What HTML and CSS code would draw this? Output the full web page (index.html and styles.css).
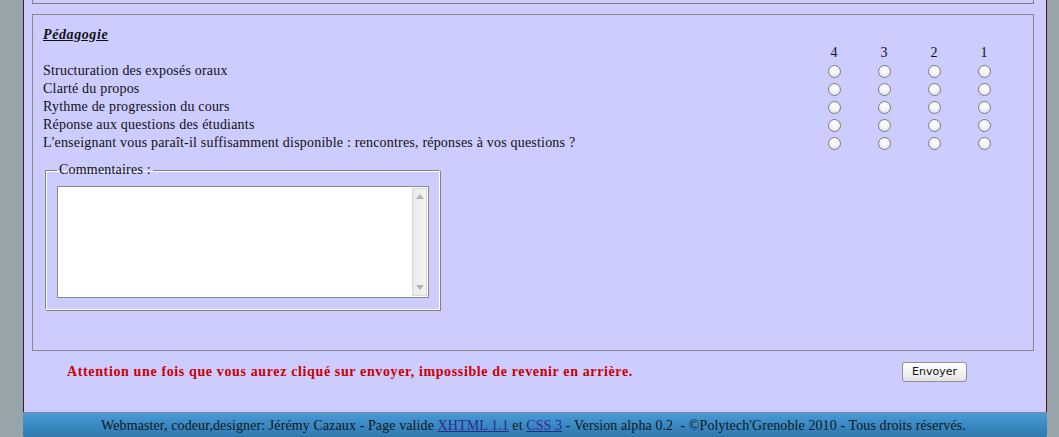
FILE: index.html
```html
<!DOCTYPE html>
<html lang="fr">
<head>
<meta charset="utf-8">
<title>Évaluation</title>
<link rel="stylesheet" href="styles.css">
</head>
<body>
<div class="page">
  <div class="main">
    <div class="prev-block"></div>
    <fieldset class="section">
      <h2 class="section-title">Pédagogie</h2>
      <div class="grid">
        <div class="head-label"></div>
        <div class="num">4</div><div class="num">3</div><div class="num">2</div><div class="num">1</div>

        <div class="label">Structuration des exposés oraux</div>
        <div class="cell"><input type="radio" name="q1"></div><div class="cell"><input type="radio" name="q1"></div><div class="cell"><input type="radio" name="q1"></div><div class="cell"><input type="radio" name="q1"></div>

        <div class="label">Clarté du propos</div>
        <div class="cell"><input type="radio" name="q2"></div><div class="cell"><input type="radio" name="q2"></div><div class="cell"><input type="radio" name="q2"></div><div class="cell"><input type="radio" name="q2"></div>

        <div class="label">Rythme de progression du cours</div>
        <div class="cell"><input type="radio" name="q3"></div><div class="cell"><input type="radio" name="q3"></div><div class="cell"><input type="radio" name="q3"></div><div class="cell"><input type="radio" name="q3"></div>

        <div class="label">Réponse aux questions des étudiants</div>
        <div class="cell"><input type="radio" name="q4"></div><div class="cell"><input type="radio" name="q4"></div><div class="cell"><input type="radio" name="q4"></div><div class="cell"><input type="radio" name="q4"></div>

        <div class="label">L'enseignant vous paraît-il suffisamment disponible : rencontres, réponses à vos questions ?</div>
        <div class="cell"><input type="radio" name="q5"></div><div class="cell"><input type="radio" name="q5"></div><div class="cell"><input type="radio" name="q5"></div><div class="cell"><input type="radio" name="q5"></div>
      </div>
      <fieldset class="comments">
        <legend>Commentaires :</legend>
        <div class="comment-box">
          <textarea class="comment-input"></textarea>
          <div class="scrollbar">
            <span class="arrow arrow-up"></span>
            <span class="arrow arrow-down"></span>
          </div>
        </div>
      </fieldset>
    </fieldset>
    <div class="submit-row">
      <p class="warning">Attention une fois que vous aurez cliqué sur envoyer, impossible de revenir en arrière.</p>
      <button class="send" type="submit">Envoyer</button>
    </div>
  </div>
  <div class="footer">
    Webmaster, codeur,designer: Jérémy Cazaux - Page valide <a href="#">XHTML 1.1</a> et <a href="#">CSS 3</a> - Version alpha 0.2 &nbsp;- ©Polytech'Grenoble 2010 - Tous droits réservés.
  </div>
</div>
</body>
</html>
```

FILE: styles.css
```css
html, body {
  margin: 0;
  padding: 0;
  background: #97a4a9;
  height: 437px;
  overflow: hidden;
}

body {
  font-family: "Liberation Serif", "Times New Roman", serif;
  font-size: 14px;
  color: #111;
}

.page {
  margin-left: 23px;
  width: 1024px;
}

.main {
  background: #ccccff;
  border-left: 1px solid #4a1428;
  border-right: 1px solid #5c0a0a;
  padding: 0 12px 0 8px;
}

.prev-block {
  height: 3px;
  border: 1px solid #808080;
  border-top: none;
  margin-bottom: 10px;
}

.section {
  margin: 0;
  border: 1px solid #888;
  padding: 11px 10px 0 10px;
  box-sizing: border-box;
  height: 337px;
}

.section-title {
  margin: 0;
  font-size: 14px;
  font-weight: bold;
  font-style: italic;
  text-decoration: underline;
  line-height: 18px;
  letter-spacing: 0.6px;
}

.grid {
  display: grid;
  grid-template-columns: 1fr 50px 50px 50px 50px;
  grid-auto-rows: 18px;
  margin-right: 14px;
  line-height: 18px;
}

.num {
  text-align: center;
  font-size: 14px;
}

.label {
  white-space: nowrap;
  letter-spacing: 0.2px;
}

.cell {
  display: flex;
  align-items: center;
  justify-content: center;
}

.cell input[type="radio"] {
  -webkit-appearance: none;
  appearance: none;
  margin: 0;
  width: 13px;
  height: 13px;
  border-radius: 50%;
  border: 1px solid #7d7d7d;
  background: radial-gradient(circle at 50% 35%, #ffffff 0%, #f4f4f6 45%, #d4d6dc 100%);
  box-sizing: border-box;
}

.comments {
  margin: 11px 0 0 2px;
  width: 395px;
  height: 147px;
  box-sizing: border-box;
  border-style: solid;
  border-width: 1px;
  border-color: #808080 #ffffff #ffffff #808080;
  box-shadow: inset 1px 1px 0 #fff, 1px 1px 0 #808080;
  padding: 9px 10px 0 11px;
}

.comments legend {
  padding: 0 2px;
  font-size: 14px;
  line-height: 14px;
  letter-spacing: 0.2px;
}

.comment-box {
  display: flex;
  width: 372px;
  height: 112px;
  box-sizing: border-box;
  border: 1px solid #8a8a8a;
  background: #fff;
}

.comment-input {
  flex: 1;
  margin: 0;
  border: none;
  outline: none;
  resize: none;
  background: #fff;
  font-family: "Liberation Mono", monospace;
}

.scrollbar {
  width: 15px;
  margin: 1px 1px 1px 0;
  box-sizing: border-box;
  border: 1px solid #d8d8d8;
  background: linear-gradient(90deg, #eaeaea, #f4f4f4);
  display: flex;
  flex-direction: column;
  justify-content: space-between;
  align-items: center;
  padding: 5px 0 5px;
}

.arrow {
  width: 0;
  height: 0;
  border-left: 4px solid transparent;
  border-right: 4px solid transparent;
}

.arrow-up {
  border-bottom: 5px solid #b2b6bc;
}

.arrow-down {
  border-top: 5px solid #b2b6bc;
}

.submit-row {
  display: flex;
  align-items: center;
  justify-content: space-between;
  height: 61px;
  padding: 0 67px 20px 35px;
  box-sizing: border-box;
}

.warning {
  margin: 0;
  color: #cc0000;
  font-weight: bold;
  font-size: 14px;
  letter-spacing: 0.63px;
}

.send {
  font-family: "DejaVu Sans", Verdana, sans-serif;
  font-size: 11px;
  color: #111;
  padding: 0 6px;
  height: 20px;
  width: 65px;
  border: 1px solid #8f8f8f;
  border-radius: 3px;
  background: linear-gradient(#ffffff, #f1f1f1 60%, #e2e2e2);
}

.footer {
  height: 26px;
  border-top: 1px solid #8a8a8a;
  background: linear-gradient(#4b9ad6, #3a88c2 50%, #2f78ae);
  border-radius: 0 0 4px 4px;
  text-align: center;
  line-height: 26px;
  font-size: 14px;
  color: #101820;
  padding-right: 3px;
  box-sizing: border-box;
  letter-spacing: 0.1px;
}

.footer a {
  color: #2b2b8f;
}
```
